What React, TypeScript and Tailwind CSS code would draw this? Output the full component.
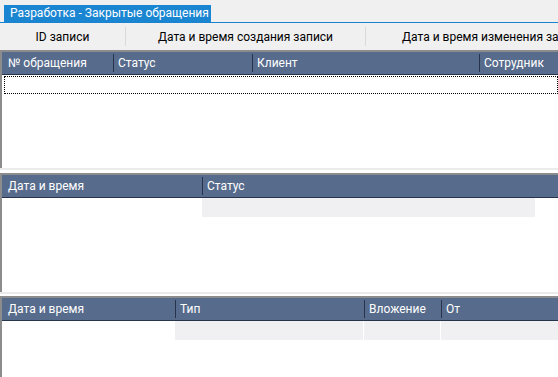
import React from 'react';

const font = { fontFamily: 'Roboto, "Noto Sans", sans-serif' };

// Header cell of a grid, with the dark separator line on its left
function Col({ w, label, first }: { w?: string; label: string; first?: boolean }) {
    return (
        <div className={`flex items-center h-full ${w ?? 'flex-1'} shrink-0`}>
            {!first && <div className="w-px h-[18px] bg-[#26334b] shrink-0" />}
            <span className={`${first ? 'pl-[5px]' : 'pl-[4px]'} whitespace-nowrap`}>{label}</span>
        </div>
    );
}

export default function App() {
    return (
        <div className="w-[558px] h-[377px] bg-white overflow-hidden text-[12px] text-black flex flex-col" style={font}>
            {/* Tab strip */}
            <div className="h-[23px] bg-[#f0f0f0] flex items-end pl-[4px] border-b border-[#1c84cf] shrink-0">
                <div className="h-[17px] bg-[#1a86d2] text-white pl-[6px] leading-[17px] w-[207px] whitespace-nowrap overflow-hidden">
                    Разработка - Закрытые обращения
                </div>
            </div>

            {/* Record info bar */}
            <div className="h-[27px] bg-[#f0f0f0] flex items-center shrink-0 overflow-hidden">
                <div className="w-[125px] text-center shrink-0">ID записи</div>
                <div className="w-px h-[19px] bg-[#d9d9d9] shrink-0" />
                <div className="w-[239px] text-center shrink-0 whitespace-nowrap">Дата и время создания записи</div>
                <div className="w-px h-[19px] bg-[#d9d9d9] shrink-0" />
                <div className="pl-[36px] whitespace-nowrap shrink-0">Дата и время изменения записи</div>
            </div>

            {/* Grid 1 */}
            <div className="h-[118px] flex flex-col border-t-2 border-[#8c8c8c] border-l-2 shrink-0">
                <div className="h-[23px] bg-[#576b8c] border-b border-[#27344d] text-white flex pl-px shrink-0">
                    <Col first w="w-[110px]" label="№ обращения" />
                    <Col w="w-[139px]" label="Статус" />
                    <Col w="w-[227px]" label="Клиент" />
                    <Col label="Сотрудник" />
                </div>
                <div className="flex-1 border-l border-white pl-[1px] pt-px">
                    <div className="h-[18px] border border-dotted border-black" />
                </div>
            </div>

            <div className="h-[5px] bg-white border-t-2 border-[#ebebeb] shrink-0" />

            {/* Grid 2 */}
            <div className="h-[119px] flex flex-col border-t-2 border-[#8c8c8c] border-l-2 shrink-0">
                <div className="h-[23px] bg-[#576b8c] border-b border-[#27344d] text-white flex pl-px shrink-0">
                    <Col first w="w-[199px]" label="Дата и время" />
                    <Col label="Статус" />
                </div>
                <div className="flex h-[19px] pl-px">
                    <div className="w-[199px]" />
                    <div className="w-[333px] bg-[#f0f0f2]" />
                </div>
            </div>

            <div className="h-[4px] bg-white border-t-2 border-[#ebebeb] shrink-0" />

            {/* Grid 3 */}
            <div className="flex-1 flex flex-col border-t-2 border-[#8c8c8c] border-l-2">
                <div className="h-[23px] bg-[#576b8c] border-b border-[#27344d] text-white flex pl-px shrink-0">
                    <Col first w="w-[172px]" label="Дата и время" />
                    <Col w="w-[189px]" label="Тип" />
                    <Col w="w-[77px]" label="Вложение" />
                    <Col label="От" />
                </div>
                <div className="flex h-[19px] pl-px">
                    <div className="w-[172px]" />
                    <div className="w-[188px] bg-[#f0f0f2]" />
                    <div className="w-px bg-white" />
                    <div className="w-[76px] bg-[#f0f0f2]" />
                    <div className="w-px bg-white" />
                    <div className="flex-1 bg-[#f0f0f2]" />
                </div>
            </div>
        </div>
    );
}
